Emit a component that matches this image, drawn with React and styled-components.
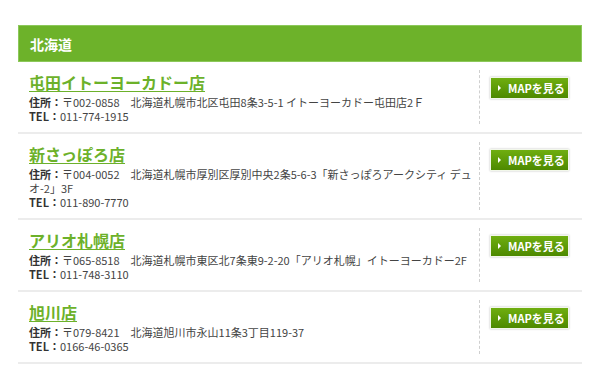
import React from "react";
import styled, { createGlobalStyle } from "styled-components";

const GlobalStyle = createGlobalStyle`
  body {
    margin: 0;
    background: #fff;
    font-family: "Noto Sans CJK JP", "Noto Sans", sans-serif;
    color: #333;
  }
`;

const shops = [
  {
    name: "屯田イトーヨーカドー店",
    address: "〒002-0858　北海道札幌市北区屯田8条3-5-1 イトーヨーカドー屯田店2Ｆ",
    tel: "011-774-1915",
  },
  {
    name: "新さっぽろ店",
    address: "〒004-0052　北海道札幌市厚別区厚別中央2条5-6-3「新さっぽろアークシティ デュオ-2」3F",
    tel: "011-890-7770",
  },
  {
    name: "アリオ札幌店",
    address: "〒065-8518　北海道札幌市東区北7条東9-2-20「アリオ札幌」イトーヨーカドー2F",
    tel: "011-748-3110",
  },
  {
    name: "旭川店",
    address: "〒079-8421　北海道旭川市永山11条3丁目119-37",
    tel: "0166-46-0365",
  },
];

export default function App() {
  return (
    <>
      <GlobalStyle />
      <Section>
        <AreaHeader>北海道</AreaHeader>
        <ShopList>
          {shops.map((s) => (
            <ShopRow key={s.name}>
              <Info>
                <ShopName href="#">{s.name}</ShopName>
                <Line>
                  <b>住所：</b>
                  {s.address}
                </Line>
                <Line>
                  <b>TEL：</b>
                  {s.tel}
                </Line>
              </Info>
              <Side>
                <MapButton href="#">
                  <Arrow />
                  MAPを見る
                </MapButton>
              </Side>
            </ShopRow>
          ))}
        </ShopList>
      </Section>
    </>
  );
}

const Section = styled.section`
  width: 564px;
  margin: 25px 0 0 18px;
`;

const AreaHeader = styled.h2`
  margin: 0;
  height: 37px;
  box-sizing: border-box;
  padding: 0 11px;
  display: flex;
  align-items: center;
  background: #6db22a;
  border: 1px solid #8cc85a;
  color: #fff;
  font-size: 14px;
  font-weight: 700;
`;

const ShopList = styled.ul`
  list-style: none;
  margin: 0;
  padding: 0;
`;

const ShopRow = styled.li`
  display: flex;
  border-bottom: 2px solid #ececec;
`;

const Info = styled.div`
  flex: 1;
  padding: 9px 2px 9px 11px;
`;

const ShopName = styled.a`
  display: block;
  width: fit-content;
  font-size: 16px;
  font-weight: 700;
  line-height: 22px;
  color: #6cb12a;
  text-decoration: underline;
  text-underline-offset: 2px;
  margin-bottom: 2px;
`;

const Line = styled.p`
  margin: 0;
  font-size: 11px;
  line-height: 14px;
  color: #444;

  b {
    color: #333;
  }
`;

const Side = styled.div`
  box-sizing: border-box;
  width: 103px;
  margin: 8px 0;
  border-left: 1px dashed #cfcfcf;
  padding: 7px 0 0 10px;
`;

const MapButton = styled.a`
  display: flex;
  align-items: center;
  gap: 6px;
  box-sizing: border-box;
  width: 79px;
  height: 22px;
  padding-left: 7px;
  background: linear-gradient(#6fae10, #4d8900);
  border: 1px solid #f2f7ea;
  box-shadow: 0 0 2px rgba(0, 0, 0, 0.25);
  color: #fff;
  font-size: 11px;
  font-weight: 700;
  text-decoration: none;
`;

const Arrow = styled.span`
  width: 0;
  height: 0;
  border-left: 3px solid #fff;
  border-top: 3px solid transparent;
  border-bottom: 3px solid transparent;
  margin-right: 1px;
`;
